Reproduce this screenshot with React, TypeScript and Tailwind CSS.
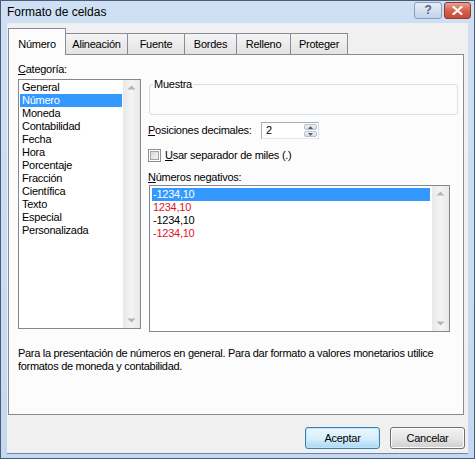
import React from "react";

const categorias = [
  "General",
  "Número",
  "Moneda",
  "Contabilidad",
  "Fecha",
  "Hora",
  "Porcentaje",
  "Fracción",
  "Científica",
  "Texto",
  "Especial",
  "Personalizada",
];

const negativos = [
  { text: "-1234,10", red: false },
  { text: "1234,10", red: true },
  { text: "-1234,10", red: false },
  { text: "-1234,10", red: true },
];

const tabs = ["Número", "Alineación", "Fuente", "Bordes", "Relleno", "Proteger"];
const tabWidths = ["w-[58px]", "w-[63px]", "w-[58px]", "w-[53px]", "w-[55px]", "w-[58px]"];

function Arrow({ up }: { up?: boolean }) {
  return (
    <svg width="9" height="5" viewBox="0 0 9 5">
      {up ? (
        <path d="M0.5 4.5 L4.5 0.5 L8.5 4.5 Z" fill="#b4b4b4" />
      ) : (
        <path d="M0.5 0.5 L4.5 4.5 L8.5 0.5 Z" fill="#b4b4b4" />
      )}
    </svg>
  );
}

function ScrollBar() {
  return (
    <div className="w-[17px] flex flex-col justify-between items-center bg-gradient-to-r from-[#e8e8e8] via-[#f4f4f4] to-[#e8e8e8] py-[5px]">
      <Arrow up />
      <Arrow />
    </div>
  );
}

function Button({ label, primary }: { label: string; primary?: boolean }) {
  return (
    <div
      className={
        "w-[75px] h-[22px] rounded-[3px] border flex items-center justify-center " +
        (primary
          ? "border-[#3c7fb1] bg-gradient-to-b from-[#eaf6fd] via-[#d9f0fc] to-[#a7d9f5] shadow-[inset_0_0_0_1px_#c0e4f8]"
          : "border-[#707070] bg-gradient-to-b from-[#f2f2f2] via-[#e6e6e6] to-[#cfcfcf] shadow-[inset_0_0_0_1px_#fcfcfc]")
      }
    >
      {label}
    </div>
  );
}

export default function App() {
  return (
    <div className="w-[475px] h-[459px] flex flex-col border border-[#4c5e76] bg-gradient-to-b from-[#cfe0f4] to-[#c4d9f1] text-[11px] leading-[13px] tracking-[-0.25px] text-black font-['Liberation_Sans',Arial,sans-serif]">
      {/* title bar */}
      <div className="h-[22px] flex items-center justify-between pl-[6px] pr-[3px]">
        <span className="text-[12px] mt-[1px] tracking-normal">Formato de celdas</span>
        <div className="flex gap-[2px] -mt-[3px]">
          <div className="w-[28px] h-[17px] rounded-[3px] border border-[#8a9fbb] bg-gradient-to-b from-[#e6eef8] to-[#c2d4ea] flex items-center justify-center text-[12px] font-bold text-[#55657b]">
            ?
          </div>
          <div className="w-[27px] h-[17px] rounded-[3px] border border-[#8a3b33] bg-gradient-to-b from-[#e8a093] via-[#d4614f] to-[#c44b36] flex items-center justify-center">
            <svg width="11" height="9" viewBox="0 0 11 9">
              <path d="M1.5 1 L9.5 8 M9.5 1 L1.5 8" stroke="#fff" strokeWidth="2.2" strokeLinecap="round" />
            </svg>
          </div>
        </div>
      </div>

      {/* client area */}
      <div className="flex-1 mx-[6px] mb-[4px] bg-[#f0f0f0] flex flex-col border-b border-[#6b86a8]">
        {/* tabs */}
        <div className="flex items-end pl-[1px] pt-[4px] h-[31px]">
          {tabs.map((t, i) => (
            <div
              key={t}
              className={
                tabWidths[i] +
                " flex justify-center border-t border-l border-r border-[#898c95] " +
                (i > 0 ? "-ml-[1px] " : "") +
                (i === 0
                  ? "h-[27px] items-center pt-[5px] bg-[#fcfcfc] relative z-10 -mb-[1px]"
                  : "h-[21px] items-center bg-gradient-to-b from-[#f4f4f4] to-[#e3e3e3]")
              }
            >
              {t}
            </div>
          ))}
        </div>

        {/* panel */}
        <div className="ml-[1px] w-[456px] h-[361px] border border-[#898c95] bg-[#fcfcfc] pl-[9px] pt-[8px] flex flex-col">
          <div className="flex">
            {/* left column */}
            <div className="flex flex-col w-[123px]">
              <div>
                <span className="underline">C</span>ategoría:
              </div>
              <div className="mt-[3px] h-[250px] border border-[#828790] bg-white flex">
                <div className="flex-1 p-[1px]">
                  {categorias.map((c, i) => (
                    <div
                      key={c}
                      className={"pl-[2px] " + (i === 1 ? "bg-[#3399ff] text-white" : "")}
                    >
                      {c}
                    </div>
                  ))}
                </div>
                <ScrollBar />
              </div>
            </div>

            {/* right column */}
            <div className="flex flex-col ml-[8px] w-[309px]">
              <div className="mt-[21px] h-[31px] w-[309px] rounded-[3px] border border-[#d5dfe5] relative">
                <span className="absolute left-[3px] -top-[7px] px-[1px] bg-[#fcfcfc]">Muestra</span>
              </div>

              <div className="mt-[7px] flex items-center h-[17px]">
                <span className="w-[113px] -ml-[1px]">
                  <span className="underline">P</span>osiciones decimales:
                </span>
                <div className="w-[58px] h-[17px] border border-[#abadb3] border-b-[#e3e9ef] border-r-[#dbdfe6] bg-white flex">
                  <span className="flex-1 pl-[4px] leading-[15px]">2</span>
                  <div className="w-[15px] flex flex-col gap-[1px] p-[1px]">
                    <div className="flex-1 rounded-[2px] border border-[#b7c1cc] bg-gradient-to-b from-[#f3f3f3] to-[#dcdcdc] flex items-center justify-center">
                      <svg width="5" height="3" viewBox="0 0 5 3">
                        <path d="M0 3 L2.5 0 L5 3 Z" fill="#4d6185" />
                      </svg>
                    </div>
                    <div className="flex-1 rounded-[2px] border border-[#b7c1cc] bg-gradient-to-b from-[#f3f3f3] to-[#dcdcdc] flex items-center justify-center">
                      <svg width="5" height="3" viewBox="0 0 5 3">
                        <path d="M0 0 L2.5 3 L5 0 Z" fill="#4d6185" />
                      </svg>
                    </div>
                  </div>
                </div>
              </div>

              <div className="mt-[10px] flex items-center -ml-[1px]">
                <div className="w-[13px] h-[13px] border border-[#8f8f8f] bg-white p-[1px]">
                  <div className="w-full h-full border border-[#a4a4a4] bg-gradient-to-br from-[#d8d8d8] to-[#f6f6f6]" />
                </div>
                <span className="ml-[4px]">
                  <span className="underline">U</span>sar separador de miles (.)
                </span>
              </div>

              <div className="mt-[9px] -ml-[1px]">
                <span className="underline">N</span>úmeros negativos:
              </div>
              <div className="mt-[1px] h-[147px] w-[301px] border border-[#828790] bg-white flex">
                <div className="flex-1 p-[2px]">
                  {negativos.map((n, i) => (
                    <div
                      key={i}
                      className={
                        "pl-[1px] " +
                        (i === 0 ? "bg-[#3399ff] text-white" : n.red ? "text-[#e0141e]" : "")
                      }
                    >
                      {n.text}
                    </div>
                  ))}
                </div>
                <ScrollBar />
              </div>
            </div>
          </div>

          <p className="mt-[15px] pr-[2px] tracking-[-0.3px]">
            Para la presentación de números en general. Para dar formato a valores monetarios utilice
            formatos de moneda y contabilidad.
          </p>
        </div>

        {/* buttons */}
        <div className="flex justify-end gap-[10px] mt-[12px] pr-[3px]">
          <Button label="Aceptar" primary />
          <Button label="Cancelar" />
        </div>
      </div>
    </div>
  );
}
